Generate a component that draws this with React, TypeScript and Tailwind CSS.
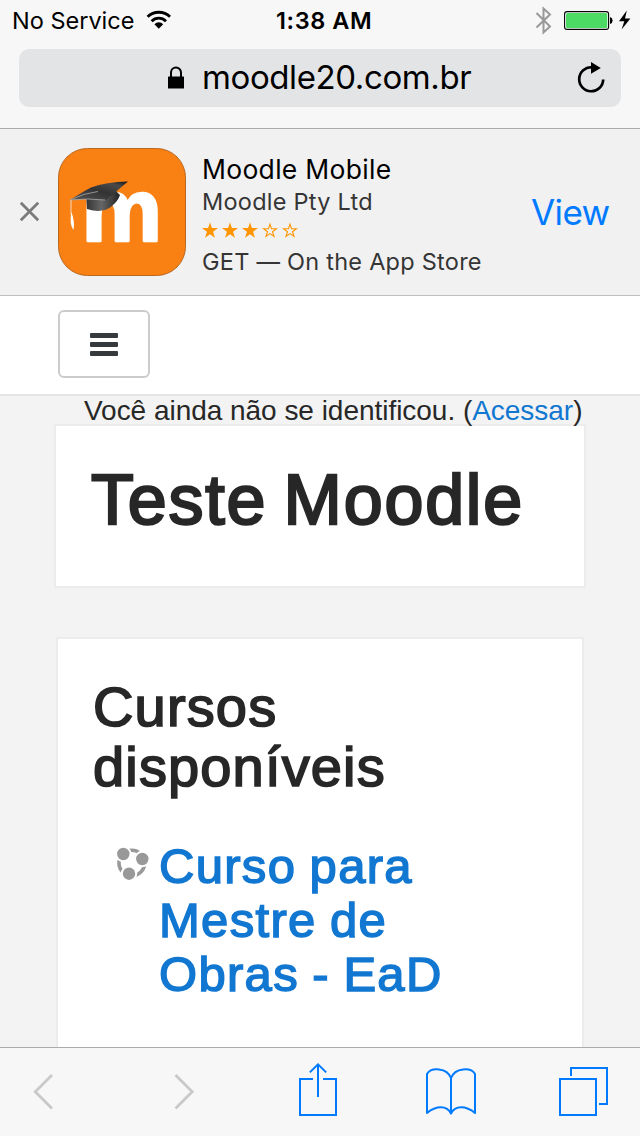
import type { ReactNode } from "react";

const STAR =
  "M8 0.2 L9.9 6 L16 6.1 L11.1 9.8 L12.9 15.8 L8 12.2 L3.1 15.8 L4.9 9.8 L0 6.1 L6.1 6 Z";

function Star({ filled }: { filled: boolean }) {
  return (
    <svg width="16" height="17" viewBox="0 0 16 17">
      {filled ? (
        <path d={STAR} fill="#ff9500" />
      ) : (
        <path
          d="M8 2.1 L9.5 6.7 L14.4 6.8 L10.5 9.7 L12 14.4 L8 11.6 L4 14.4 L5.5 9.7 L1.6 6.8 L6.5 6.7 Z"
          fill="none"
          stroke="#ff9500"
          strokeWidth="1.1"
        />
      )}
    </svg>
  );
}

function StatusBar() {
  return (
    <div className="flex h-10 items-start text-2xl leading-10">
      <span className="ml-3 w-[135px] whitespace-nowrap text-[23.5px] leading-[41px]">
        No Service
      </span>
      <svg className="mt-[10px] -ml-px" width="26" height="20" viewBox="0 0 26 20">
        <g fill="none" stroke="#000" strokeWidth="2.8">
          <path d="M1.6 6.8 A16 16 0 0 1 24 6.8" />
          <path d="M5.6 11.2 A10.2 10.2 0 0 1 20 11.2" />
        </g>
        <path d="M12.8 18.8 L8.4 14.2 A6.2 6.2 0 0 1 17.2 14.2 Z" />
      </svg>
      <span className="ml-[104px] w-[96px] whitespace-nowrap text-[23.5px] font-semibold leading-[41px] tracking-[0.6px]">
        1:38 AM
      </span>
      <svg className="mt-[6px] ml-[163px]" width="17" height="29" viewBox="0 0 17 29">
        <path
          d="M1.5 7 L15 20.5 L8.5 26.5 V2.5 L15 8.5 L1.5 21.5"
          fill="none"
          stroke="#999"
          strokeWidth="2"
        />
      </svg>
      <svg className="mt-[10px] ml-[12px]" width="68" height="22" viewBox="0 0 68 22">
        <rect x="0.6" y="1.6" width="44" height="17.8" rx="2.5" fill="#fff" stroke="#000" strokeWidth="1.1" />
        <rect x="2" y="3" width="41.3" height="15" rx="1.5" fill="#4cd964" />
        <path d="M46 7 A3.4 3.6 0 0 1 46 14 Z" />
        <path d="M62.8 0.5 L55 11.2 H60.3 L57.6 19.5 L66.4 8.6 H61 Z" />
      </svg>
    </div>
  );
}

function AddressBar() {
  return (
    <div className="mx-[19px] mt-[9px] flex h-[58px] items-start rounded-[10px] bg-[#e3e4e6]">
      <svg className="mt-[17px] ml-[149px]" width="16" height="23" viewBox="0 0 16 23">
        <path d="M3 12 V6.5 A5 5 0 0 1 13 6.5 V12" fill="none" stroke="#000" strokeWidth="2" />
        <rect y="10.5" width="16" height="12" rx="0.5" />
      </svg>
      <span className="ml-[18px] w-[372px] whitespace-nowrap text-[33px] leading-[56px] tracking-[-0.4px]">
        moodle20.com.br
      </span>
      <svg className="mt-[12px]" width="32" height="34" viewBox="0 0 32 34">
        <path d="M18 6.3 A12 12 0 1 0 29.2 18.5" fill="none" stroke="#000" strokeWidth="2.7" />
        <path d="M17 1 L26.8 7 L17 12.8 Z" />
      </svg>
    </div>
  );
}

function MoodleIcon() {
  return (
    <svg width="128" height="128" viewBox="0 0 128 128">
      <defs>
        <linearGradient id="board" x1="0" x2="1" y1="1" y2="0">
          <stop offset="0" stopColor="#555" />
          <stop offset="0.5" stopColor="#333" />
          <stop offset="0.8" stopColor="#4a4a4a" />
          <stop offset="1" stopColor="#111" />
        </linearGradient>
        <linearGradient id="cap" x1="0" x2="1" y1="0" y2="0">
          <stop offset="0" stopColor="#333" />
          <stop offset="0.45" stopColor="#666" />
          <stop offset="1" stopColor="#222" />
        </linearGradient>
      </defs>
      <rect x="0.5" y="0.5" width="127" height="127" rx="29" fill="#f98012" stroke="#b9661f" />
      <text
        x="23.4"
        y="93.4"
        fontSize="89"
        fontWeight="700"
        fill="#fff"
        stroke="#fff"
        strokeWidth="2.6"
        strokeLinejoin="round"
        textLength="80.5"
        lengthAdjust="spacingAndGlyphs"
        fontFamily="Liberation Sans, sans-serif"
      >
        m
      </text>
      <path d="M28 46 L29 61 Q45 66 54 58 Q60 53 62 47 L56 41 Z" fill="url(#cap)" />
      <path d="M12 52 Q26 43 33 39.5 Q48 34 70 33.5 L48 52 Q30 50 12 52 Z" fill="url(#board)" />
      <path d="M12 52 Q26 45 40 43.5 M12 52 Q30 50 47 52" fill="none" stroke="#aaa" strokeWidth="0.8" />
      <path d="M13 52 V67" stroke="#f5d8bd" strokeWidth="1" />
      <path d="M13.5 64 Q17 74 15.5 82 Q11 76 13.5 64 Z" fill="#fff" />
    </svg>
  );
}

function AppBanner() {
  return (
    <div className="flex h-[168px] shrink-0 border-y border-y-[#c0c0c0] border-t-[#ababab] bg-[#f1f1f1]">
      <svg className="mt-[72px] ml-[19px]" width="21" height="21" viewBox="0 0 21 21">
        <path d="M1.8 1.8 L19.2 19.2 M19.2 1.8 L1.8 19.2" stroke="#7b7b7b" strokeWidth="2.8" />
      </svg>
      <div className="mt-[19px] ml-[18px] h-32 w-32">
        <MoodleIcon />
      </div>
      <div className="ml-4 w-[330px] whitespace-nowrap pt-6 text-[#353535]">
        <p className="text-[26.5px] leading-8 tracking-[0.3px] text-black">Moodle Mobile</p>
        <p className="mt-[2px] text-[23.5px] leading-[30px] tracking-[0.25px]">Moodle Pty Ltd</p>
        <div className="mt-[5px] flex h-[17px] gap-1">
          {[1, 2, 3, 4, 5].map((n) => (
            <Star key={n} filled={n <= 3} />
          ))}
        </div>
        <p className="mt-[8px] text-[23.5px] leading-[30px] tracking-[0.25px]">
          GET — On the App Store
        </p>
      </div>
      <span className="mt-[60px] -ml-px text-[35px] leading-[46px] tracking-[-0.6px] text-[#007aff]">
        View
      </span>
    </div>
  );
}

function Navbar() {
  return (
    <div className="flex h-[100px] shrink-0 border-b-2 border-[#e5e5e5] bg-white pt-[14px] pl-[58px]">
      <button className="flex h-[68px] w-[92px] flex-col items-center justify-center gap-[4px] rounded-md border-2 border-[#ccc]">
        <span className="h-[5px] w-7 rounded-[1px] bg-[#373a3c]" />
        <span className="h-[5px] w-7 rounded-[1px] bg-[#373a3c]" />
        <span className="h-[5px] w-7 rounded-[1px] bg-[#373a3c]" />
      </button>
    </div>
  );
}

function CourseIcon() {
  return (
    <svg width="33" height="33" viewBox="0 0 33 33">
      <circle cx="15.8" cy="16" r="12.8" fill="none" stroke="#999" strokeWidth="3.6" />
      <g fill="#999" stroke="#fff" strokeWidth="2">
        <circle cx="7.3" cy="7" r="7.2" />
        <circle cx="26.3" cy="12" r="7.2" />
        <circle cx="13" cy="26.7" r="7.2" />
      </g>
    </svg>
  );
}

function ToolIcon({ children, className, color }: { children: ReactNode; className: string; color: string }) {
  return (
    <svg className={className} width="52" height="56" viewBox="0 0 52 56" fill="none" stroke={color} strokeWidth="2">
      {children}
    </svg>
  );
}

function Toolbar() {
  return (
    <div className="flex h-[89px] shrink-0 border-t border-[#ababab] bg-[#f7f7f7] pt-[14px]">
      <ToolIcon className="ml-[18px]" color="#c9c9c9">
        <path d="M34 13 L17.3 29.8 L34 46.6" strokeWidth="2.8" />
      </ToolIcon>
      <ToolIcon className="ml-[88px]" color="#c9c9c9">
        <path d="M17.5 13 L34.2 29.8 L17.5 46.6" strokeWidth="2.8" />
      </ToolIcon>
      <ToolIcon className="ml-[82px]" color="#007aff">
        <path d="M21 17 H8 V53 H44 V17 H31" />
        <path d="M26 2.5 V35" />
        <path d="M17.8 10.4 L26 2.4 L34.2 10.4" />
      </ToolIcon>
      <ToolIcon className="ml-[81px]" color="#007aff">
        <path
          d="M26 51.5 V16 C22 5.5 6 5 2 12 V51 C11 43.5 22 43 26 51.5 C30 43 41 43.5 50 51 V12 C46 5 30 5.5 26 16"
          strokeLinejoin="round"
        />
      </ToolIcon>
      <ToolIcon className="ml-[81px]" color="#007aff">
        <path d="M2 17 H38 V53 H2 Z" />
        <path d="M13 14 V6 H49 V42 H41" />
      </ToolIcon>
    </div>
  );
}

export default function App() {
  return (
    <div className="flex h-[1136px] w-[640px] flex-col overflow-hidden bg-[#f3f3f3] font-['Inter',sans-serif] text-black">
      <header className="h-[128px] shrink-0 bg-[#f7f7f7]">
        <StatusBar />
        <AddressBar />
      </header>
      <AppBanner />
      <Navbar />

      <main className="min-h-0 flex-1 overflow-hidden font-['Liberation_Sans',sans-serif] text-[#272727]">
        <p className="h-7 whitespace-nowrap pl-[84px] text-[28px] leading-[29px] tracking-[-0.03px]">
          Você ainda não se identificou. (<a className="text-[#1177d1]">Acessar</a>)
        </p>

        <section className="ml-[54px] h-[164px] w-[532px] border-2 border-[#ececec] bg-white pt-[34px] pl-[35px]">
          <h1 className="whitespace-nowrap text-[70px] leading-[81px] tracking-[1.8px] [word-spacing:-5px] [-webkit-text-stroke:2.4px_#272727]">
            Teste Moodle
          </h1>
        </section>

        <section className="mt-[49px] ml-14 h-[500px] w-[528px] border-2 border-[#ececec] bg-white pt-[38px] pl-[35px]">
          <h2 className="text-[56px] leading-[60px] tracking-[1.15px] [-webkit-text-stroke:1.7px_#272727]">
            Cursos
            <br />
            disponíveis
          </h2>
          <div className="mt-[42px] flex">
            <div className="mt-[8px] ml-[23px]">
              <CourseIcon />
            </div>
            <h3 className="ml-[10px] whitespace-nowrap text-[49px] leading-[54px] tracking-[1.3px] text-[#1177d1] [word-spacing:-1.5px] [-webkit-text-stroke:1.5px_#1177d1]">
              Curso para
              <br />
              Mestre de
              <br />
              Obras - EaD
            </h3>
          </div>
        </section>
      </main>

      <Toolbar />
    </div>
  );
}
